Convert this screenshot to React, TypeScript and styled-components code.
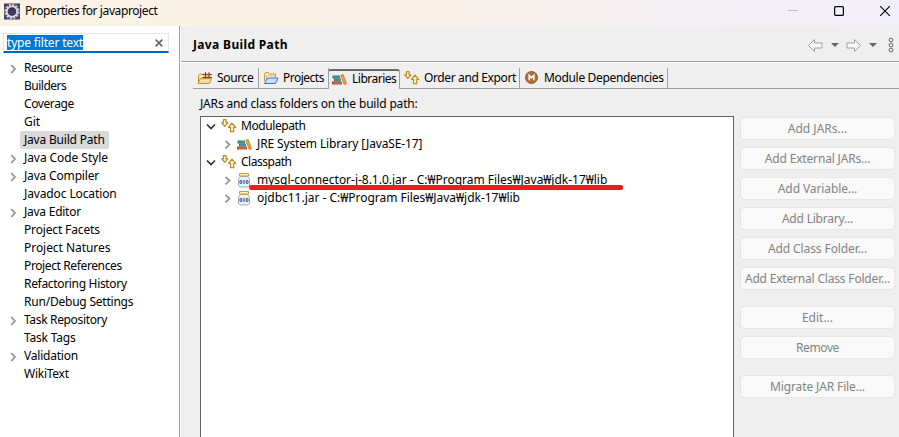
import React from "react";
import styled, { createGlobalStyle } from "styled-components";

const Global = createGlobalStyle`
  *{box-sizing:border-box}
  html,body{margin:0;overflow:hidden}
  body{font:12px/18px "Noto Sans","Noto Sans CJK KR",sans-serif;color:#000;background:#efefef}
`;
const Window = styled.div`width:899px;height:437px;display:flex;flex-direction:column;overflow:hidden;`;
const TitleBar = styled.header`
  height:26px;flex:none;display:flex;align-items:center;
  background:linear-gradient(90deg,#faf3e5 0%,#faf1e8 45%,#f4f0f6 80%,#f1eff9 100%);
  padding:0 9px 4px 4px;
`;
const Label = styled.span<{ $s?: number; $bold?: boolean }>`
  white-space:pre;letter-spacing:${p => p.$s ?? 0}px;font-weight:${p => (p.$bold ? 700 : 400)};
`;
const WindowTitle = styled(Label)`margin-left:4px;flex:1;`;
const Controls = styled.div`display:flex;align-items:center;gap:36px;`;
const Body = styled.div`flex:1;display:flex;min-height:0;`;
const Sidebar = styled.aside`width:181px;flex:none;background:#fff;border-right:1px solid #fff;box-shadow:inset -1px 0 #a0a0a0;padding:7px 0 0 3px;`;
const Filter = styled.div`
  width:166px;height:20px;border:1px solid #e5e5e5;border-bottom:2px solid #0067c0;
  display:flex;align-items:center;justify-content:space-between;padding:0 5px 0 3px;margin-bottom:6px;
`;
const Selection = styled(Label)`background:#0078d7;color:#fff;height:15px;line-height:15px;`;
const NavItem = styled.div`height:18px;display:flex;align-items:center;`;
const Expander = styled.div`width:17px;padding:2px 0 0 7px;display:flex;flex:none;`;
const NavText = styled(Label)<{ $selected?: boolean }>`
  height:18px;padding:0 4px;border-radius:2px;background:${p => (p.$selected ? "#d9d9d9" : "transparent")};
`;
const Main = styled.main`flex:1;display:flex;flex-direction:column;min-width:0;`;
const Heading = styled.div`
  height:37px;flex:none;display:flex;align-items:center;justify-content:space-between;
  padding:2px 5px 0 12px;border-bottom:1px solid #fff;box-shadow:inset 0 -1px #a0a0a0;
`;
const History = styled.div`display:flex;align-items:center;`;
const Tabs = styled.div`height:26px;flex:none;margin:0 0 0 12px;display:flex;padding-top:5px;`;
const Tab = styled.div<{ $w: number; $active?: boolean; $gap?: number }>`
  width:${p => p.$w}px;height:21px;flex:none;display:flex;align-items:center;padding-left:4px;gap:${p => p.$gap ?? 4}px;
  border-right:1px solid #a0a0a0;border-bottom:1px solid ${p => (p.$active ? "#efefef" : "#a0a0a0")};
  svg{flex:none}
  ${p => p.$active && "margin-left:-1px;border-left:1px solid #a0a0a0;border-top:2px solid #696969;border-radius:3px 3px 0 0;padding-left:3px;height:20px;margin-top:1px;padding-bottom:2px;border-bottom:0;"}
`;
const TabRest = styled.div`flex:1;border-bottom:1px solid #a0a0a0;`;
const Caption = styled(Label)`padding:6px 0 0 19px;height:27px;flex:none;`;
const Content = styled.div`flex:1;display:flex;gap:6px;padding-left:19px;min-height:0;`;
const Tree = styled.div`width:534px;flex:none;border:1px solid #646464;border-bottom:0;background:#fff;`;
const TreeItem = styled.div<{ $depth: number }>`
  position:relative;height:18px;display:flex;align-items:center;padding-left:${p => 4 + p.$depth * 16}px;
  svg{flex:none}
`;
const TreeIcon = styled.div`width:16px;margin:0 4px 0 4px;display:flex;`;
const Marker = styled.div`position:absolute;left:48px;top:14px;width:374px;height:5px;background:#ed1c24;border-radius:2px;z-index:1;`;
const Actions = styled.div`width:155px;padding-top:1px;display:flex;flex-direction:column;`;
const Action = styled.button<{ $gap?: number }>`
  height:23px;flex:none;margin:0 0 ${p => p.$gap ?? 7}px;padding:0;border:1px solid #e6e6e6;border-radius:4px;
  background:#f9f9f9;color:#838383;font:inherit;line-height:18px;text-align:center;
`;

const Chevron = ({ open = false }: { open?: boolean }) => (
  <svg width="12" height="12" viewBox="0 0 12 12" fill="none" strokeWidth="1.7">
    {open ? <path d="M2 4.5l4 4 4-4" stroke="#303030" /> : <path d="M4.5 2.8l4 3.8-4 3.8" stroke="#929292" />}
  </svg>
);
const NavChevron = () => (
  <svg width="7" height="10" viewBox="0 0 7 10" fill="none"><path d="M1.3 1.2L5 5 1.3 8.8" stroke="#929292" strokeWidth="1.7" /></svg>
);
const EclipseIcon = () => (
  <svg width="17" height="17" viewBox="0 0 17 17">
    <rect width="16" height="16" y=".5" fill="#4b4068" />
    <circle cx="8" cy="8.5" r="6.6" fill="none" stroke="#d0ced6" strokeWidth="2" strokeDasharray="2.2 1.25" />
    <circle cx="8" cy="8.5" r="5.2" fill="#352b4d" stroke="#dcdae0" strokeWidth="1.8" />
    <path d="M4.4 7h7.2M4 8.8h8M4.4 10.5h7.2" stroke="#5e5575" strokeWidth=".7" />
  </svg>
);
const SourceIcon = () => (
  <svg width="16" height="16" viewBox="0 0 16 16" strokeLinejoin="round">
    <path d="M1.5 12V5.5l1-1.5H5l1.5 1.5H13V11z" fill="#fbe6ad" stroke="#c98e3c" />
    <path d="M6.5 3.5h7v6h-7z" fill="#e9c294" />
    <path d="M5.5 4.5H15M5.5 7.5H15M8.5 2v7M12 2v7" stroke="#74492a" />
    <path d="M.9 13.5L3.5 8.7H14.500L12.500 13.500z" fill="#fbdf9c" stroke="#cc8a32" />
  </svg>
);
const ProjectsIcon = () => (
  <svg width="16" height="16" viewBox="0 0 16 16" strokeLinejoin="round">
    <path d="M1.5 11V4l1-1.5h3L6.7 4h5.8v3" fill="#fbe8b6" stroke="#c89a45" />
    <path d="M3.5 11V6H12v3" fill="#fff" stroke="#d5bd83" />
    <path d="M1.5 13.5l3-5.5H15l-2.500 5.500z" fill="#c6dffa" stroke="#4272b7" />
  </svg>
);
const LibraryIcon = () => (
  <svg width="16" height="16" viewBox="0 0 16 16">
    <path d="M.5 4.500H8v3H.5z" fill="#257d63" /><path d="M1.500 5.500H8v1H1.500z" fill="#5daa8f" />
    <path d="M2 7.500h7v3H2z" fill="#2a6c85" /><path d="M3 8.500h6v1H3z" fill="#75adbd" />
    <path d="M0 10.500h10v3H0z" fill="#a84f29" /><path d="M1.500 11.500H10v1H1.500z" fill="#d9865d" />
    <path d="M8.800 4.300l2.300-.9 3.400 9.300-2.300.8z" fill="#f0a23a" stroke="#c8741f" strokeWidth=".8" />
  </svg>
);
const OrderIcon = () => (
  <svg width="16" height="16" viewBox="0 0 16 16" fill="#fff3ca" stroke="#c18a25" strokeWidth="1.200" strokeLinejoin="round">
    <path d="M2.400 1.600h2.700v3.200h1.700L3.800 8.300.7 4.800h1.700z" /><path d="M9.500 13.700h3.200V9.300h2L11 5.200 7.400 9.300h2.100z" />
  </svg>
);
const ModuleIcon = () => (
  <svg width="16" height="16" viewBox="0 0 16 16">
    <circle cx="7.500" cy="7.500" r="6" fill="#a9713e" stroke="#8c5c35" />
    <path d="M5.200 10.300v-5l2.300 2.500 2.300-2.500v5" fill="none" stroke="#fff" strokeWidth="1.500" />
  </svg>
);
const JarIcon = () => (
  <svg width="16" height="16" viewBox="0 0 16 16">
    <path d="M3.500 4.500L1.500 6.500v6.800l1.700 1.700h7.600l1.700-1.700V6.500l-2-2z" fill="#e6effa" stroke="#98abc8" />
    <path d="M2.500 1.500h9V4h-9z" fill="#fff0bf" stroke="#cf9b3f" />
    <g fill="none" stroke="#34486f"><rect x="3" y="8.500" width="1.800" height="3" rx=".6" /><path d="M7 8v4" /><rect x="9.200" y="8.500" width="1.800" height="3" rx=".6" /></g>
  </svg>
);
const Arrow = ({ right = false }: { right?: boolean }) => (
  <svg width="15" height="13" viewBox="0 0 15 13" fill="#f8f8f8" stroke="#a0a0a0" strokeLinejoin="round">
    <path d={right ? "M14.500 6.500l-6-6v3.500H1v5h7.500v3.500z" : "M.5 6.500l6-6v3.500H14v5H6.500v3.500z"} />
  </svg>
);
const Dots = styled.svg`margin-left:4px;`;
const Caret = styled.i`border:4px solid transparent;border-top-color:#656565;border-bottom:0;margin:0 7px 0 8px;`;

const nav: [string, number, boolean?][] = [
  ["Resource", -0.5, true], ["Builders", -0.5], ["Coverage", -0.4], ["Git", 0], ["Java Build Path", -0.2], ["Java Code Style", -0.07, true],
  ["Java Compiler", -0.17, true], ["Javadoc Location", -0.12], ["Java Editor", -0.25, true], ["Project Facets", -0.15], ["Project Natures", -0.05],
  ["Project References", -0.38], ["Refactoring History", -0.32], ["Run/Debug Settings", -0.22], ["Task Repository", -0.34, true],
  ["Task Tags", -0.2], ["Validation", -0.22, true], ["WikiText", -0.25],
];
const actions: [string, number, number?][] = [
  ["Add JARs...", 0], ["Add External JARs...", -0.17], ["Add Variable...", -0.1], ["Add Library...", -0.2], ["Add Class Folder...", -0.1],
  ["Add External Class Folder...", -0.19, 16], ["Edit...", 0], ["Remove", -0.4, 16], ["Migrate JAR File...", -0.13],
];

export default function App() {
  return (
    <><Global /><Window>
      <TitleBar>
        <EclipseIcon /><WindowTitle $s={-0.4}>Properties for javaproject</WindowTitle>
        <Controls>
          <svg width="10" height="10"><path d="M0 4.500h10" stroke="#bbb" /></svg>
          <svg width="10" height="10" fill="none"><rect x=".6" y=".6" width="8.8" height="8.8" rx="1" stroke="#000" strokeWidth="1.2" /></svg>
          <svg width="10" height="10"><path d="M0 0l10 10M10 0L0 10" stroke="#000" strokeWidth="1.1" /></svg>
        </Controls>
      </TitleBar>
      <Body>
        <Sidebar>
          <Filter><Selection $s={-0.17}>type filter text</Selection><svg width="8" height="8"><path d="M.7.7l6.6 6.6M7.3.7L.7 7.3" stroke="#666" strokeWidth="1.7" /></svg></Filter>
          {nav.map(([t, s, exp]) => <NavItem key={t}><Expander>{exp && <NavChevron />}</Expander><NavText $s={s} $selected={t === "Java Build Path"}>{t}</NavText></NavItem>)}
        </Sidebar>
        <Main>
          <Heading><Label $bold $s={0.35}>Java Build Path</Label>
            <History><Arrow /><Caret /><Arrow right /><Caret />
              <Dots width="6" height="16" fill="none" stroke="#666"><circle cx="3" cy="3" r="1.9" /><circle cx="3" cy="8" r="1.900" /><circle cx="3" cy="13" r="1.900" /></Dots>
            </History>
          </Heading>
          <Tabs>
            <Tab $w={66}><SourceIcon /><Label $s={-0.35}>Source</Label></Tab>
            <Tab $w={70} $gap={4}><ProjectsIcon /><Label $s={-0.5}>Projects</Label></Tab>
            <Tab $w={72} $active $gap={4}><LibraryIcon /><Label $s={-0.5}>Libraries</Label></Tab>
            <Tab $w={120} $gap={4}><OrderIcon /><Label $s={-0.37}>Order and Export</Label></Tab>
            <Tab $w={148} $gap={4}><ModuleIcon /><Label $s={-0.33}>Module Dependencies</Label></Tab>
            <TabRest />
          </Tabs>
          <Caption $s={-0.17}>JARs and class folders on the build path:</Caption>
          <Content>
            <Tree>
              <TreeItem $depth={0}><Chevron open /><TreeIcon><OrderIcon /></TreeIcon><Label $s={-0.42}>Modulepath</Label></TreeItem>
              <TreeItem $depth={1}><Chevron /><TreeIcon><LibraryIcon /></TreeIcon><Label $s={-0.14}>JRE System Library [JavaSE-17]</Label></TreeItem>
              <TreeItem $depth={0}><Chevron open /><TreeIcon><OrderIcon /></TreeIcon><Label $s={-0.48}>Classpath</Label></TreeItem>
              <TreeItem $depth={1}><Chevron /><TreeIcon><JarIcon /></TreeIcon><Label $s={-0.02}>mysql-connector-j-8.1.0.jar - C:₩Program Files₩Java₩jdk-17₩lib</Label><Marker /></TreeItem>
              <TreeItem $depth={1}><Chevron /><TreeIcon><JarIcon /></TreeIcon><Label $s={-0.02}>ojdbc11.jar - C:₩Program Files₩Java₩jdk-17₩lib</Label></TreeItem>
            </Tree>
            <Actions>{actions.map(([t, s, g]) => <Action key={t} disabled $gap={g}><Label $s={s}>{t}</Label></Action>)}</Actions>
          </Content>
        </Main>
      </Body>
    </Window></>
  );
}
